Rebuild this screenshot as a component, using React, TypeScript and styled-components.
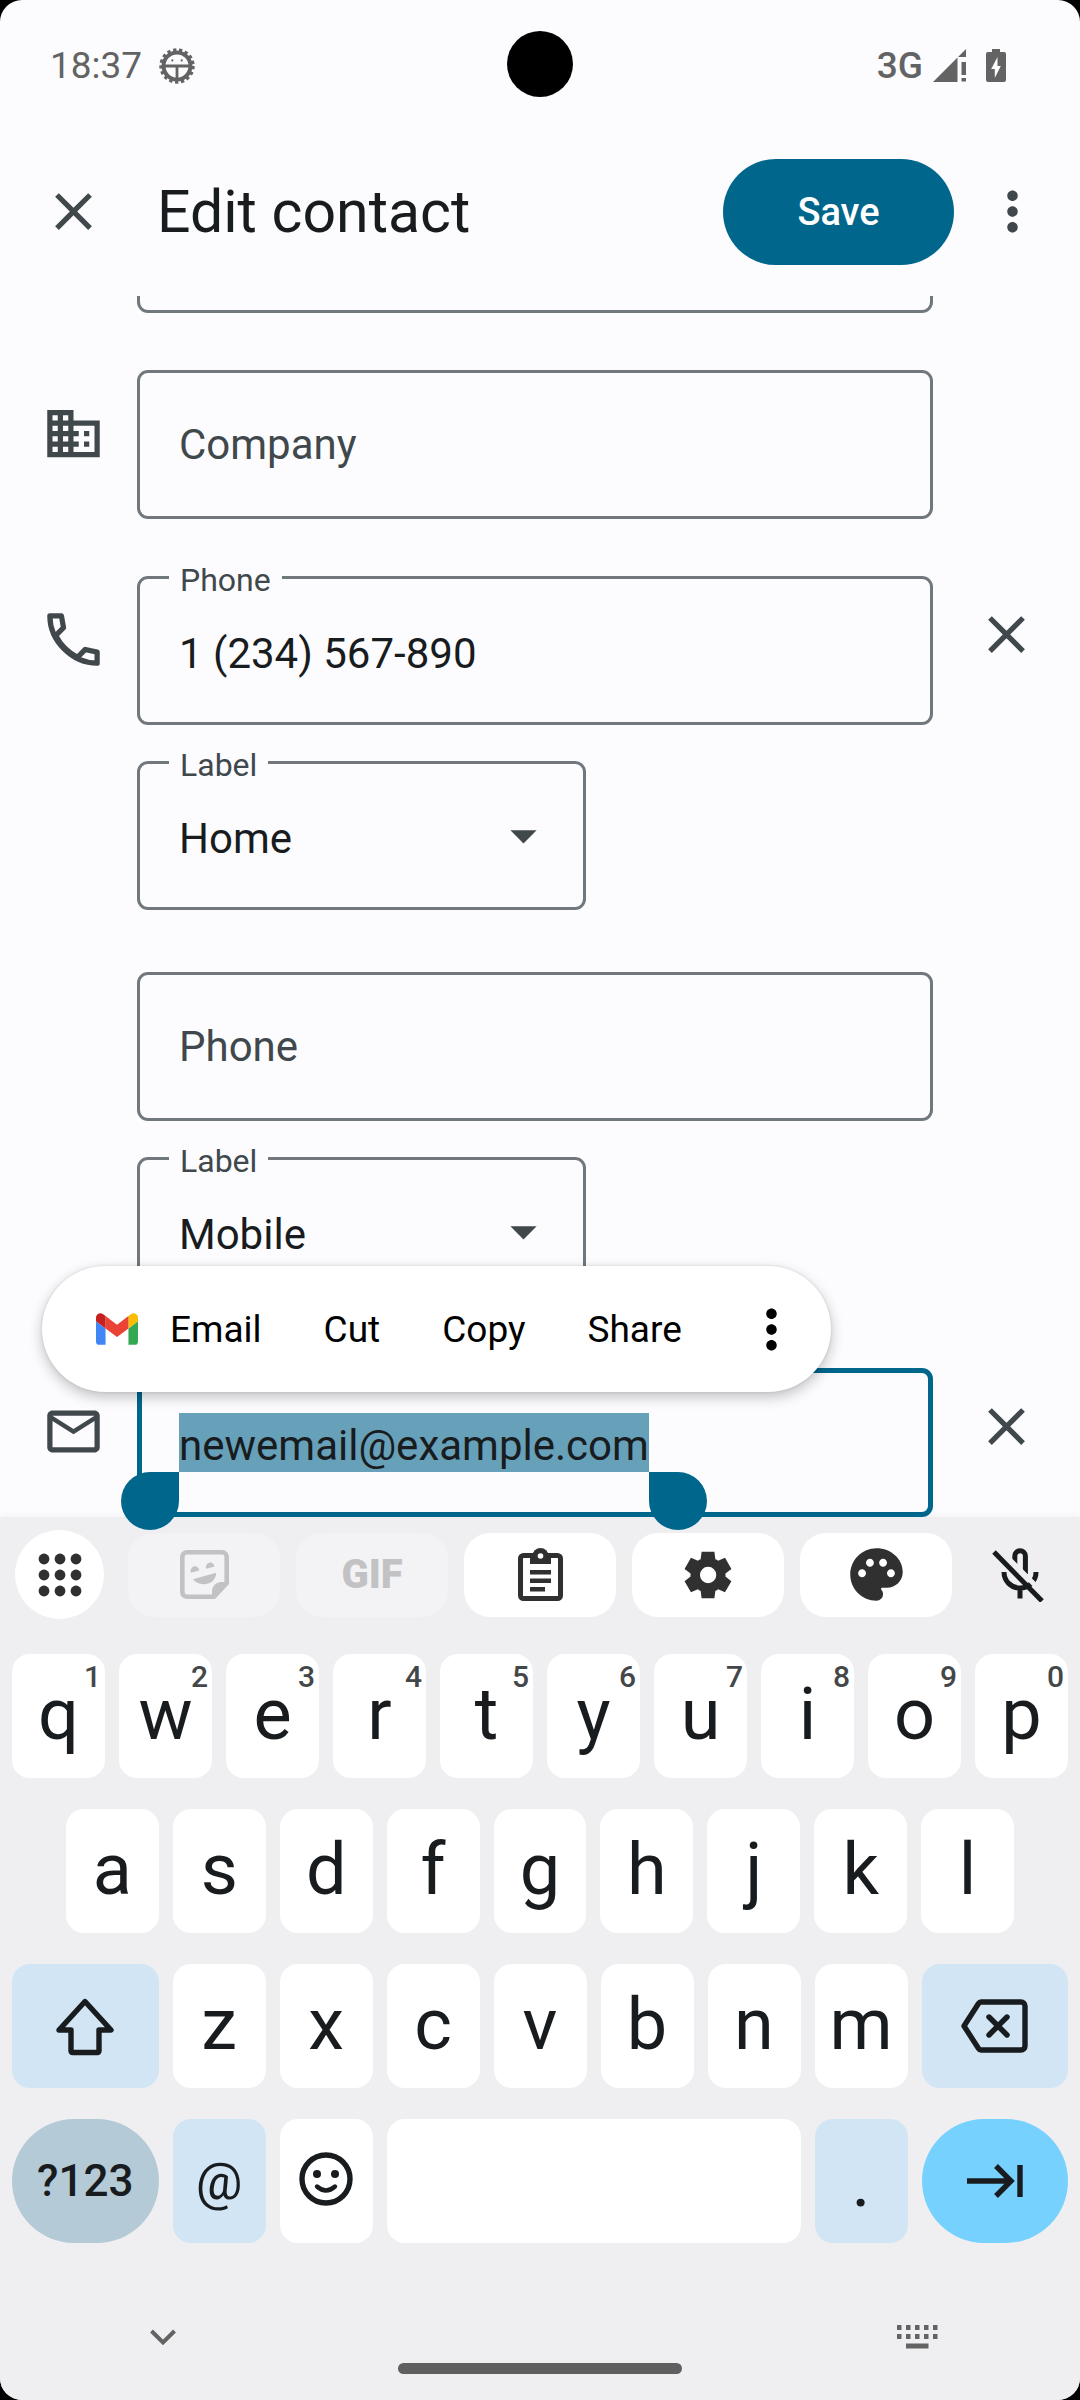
import React from "react";
import styled, { createGlobalStyle, css } from "styled-components";
import {
  MdArrowDropDown,
  MdBusiness,
  MdClose,
  MdMoreVert,
  MdOutlineEmail,
  MdPalette,
} from "react-icons/md";

const color = {
  surface: "#fcfcff",
  ink: "#191c1e",
  muted: "#40484c",
  outline: "#70787d",
  primary: "#00668b",
  selection: "#67a0b9",
  board: "#efeff1",
  tool: "#303030",
  system: "#636363",
};

const GlobalStyle = createGlobalStyle`
  * { box-sizing: border-box; }
  html { background: #000; }
  body { margin: 0; font-family: Roboto, "Noto Sans", sans-serif; color: ${color.ink}; }
  button, input, select { font: inherit; color: inherit; margin: 0; padding: 0; border: 0; background: none; outline: 0; }
  button { cursor: pointer; }
  svg { display: block; flex: none; }
`;

const Phone = styled.main`
  position: relative;
  display: flex;
  flex-direction: column;
  min-height: 100vh;
  overflow: hidden;
  border-radius: 22px;
  background: ${color.surface};
`;

/* Status bar */

const StatusBar = styled.div`
  display: flex;
  align-items: center;
  justify-content: space-between;
  height: 127px;
  padding: 4px 74px 0 50px;
  color: ${color.system};
  font-size: 37px;
`;

const StatusGroup = styled.div<{ $gap: number }>`
  display: flex;
  align-items: center;
  gap: ${(p) => p.$gap}px;
  font-weight: ${(p) => (p.$gap > 12 ? 400 : 500)};
`;

const Camera = styled.div`
  position: absolute;
  top: 31px;
  left: 50%;
  width: 66px;
  height: 66px;
  margin-left: -33px;
  border-radius: 50%;
  background: #000;
`;

/* App bar */

const AppBar = styled.header`
  display: flex;
  align-items: center;
  height: 169px;
  padding: 0 36px 0 42px;
`;

const IconButton = styled.button`
  display: flex;
  align-items: center;
  justify-content: center;
  width: 63px;
  height: 63px;
  flex: none;
  color: ${color.muted};
`;

const Title = styled.h1`
  flex: 1;
  margin: 0 0 0 52px;
  font-size: 59px;
  font-weight: 400;
`;

const SaveButton = styled.button`
  min-width: 231px;
  height: 106px;
  margin-right: 27px;
  border-radius: 53px;
  background: ${color.primary};
  color: #fff;
  font-size: 38px;
  font-weight: 500;
`;

/* Form: the first field is scrolled half way under the app bar */

const Form = styled.form`
  position: relative;
  z-index: 1;
  display: flex;
  flex-direction: column;
  margin-top: -132px;
  clip-path: inset(132px 0 -40px 0);
`;

const Row = styled.div<{ $space?: number }>`
  position: relative;
  display: grid;
  grid-template-columns: 95px 1fr 147px;
  align-items: start;
  margin-top: ${(p) => p.$space || 0}px;
  padding-left: 42px;
`;

const RowIcon = styled.span`
  grid-column: 1;
  padding-top: 32px;
  color: ${color.muted};
`;

const RowAction = styled.div`
  grid-column: 3;
  display: flex;
  justify-content: center;
  padding-top: 27px;
`;

const Field = styled.div<{ $active?: boolean; $half?: boolean }>`
  grid-column: 2;
  position: relative;
  display: flex;
  align-items: center;
  height: 149px;
  width: ${(p) => (p.$half ? "449px" : "auto")};
  border: 3px solid ${color.outline};
  border-radius: 11px;
  padding: 0 28px 0 39px;
  font-size: 42px;

  ${(p) =>
    p.$active &&
    css`
      border: 5px solid ${color.primary};
      padding-left: 37px;
    `}
`;

const FloatingLabel = styled.label`
  position: absolute;
  top: -18px;
  left: 29px;
  padding: 0 11px;
  background: ${color.surface};
  color: ${color.muted};
  font-size: 32px;
  line-height: 38px;
`;

const TextInput = styled.input<{ $labelled?: boolean }>`
  width: 100%;
  height: 100%;
  padding-top: ${(p) => (p.$labelled ? 6 : 0)}px;
  &::placeholder {
    color: ${color.muted};
    opacity: 1;
  }
`;

const Select = styled.select`
  appearance: none;
  flex: 1;
  height: 100%;
  padding-top: 6px;
`;

const Selection = styled.div`
  position: relative;
  display: flex;
`;

const SelectedInput = styled.input`
  field-sizing: content;
  height: 59px;
  padding-top: 6px;
  background: ${color.selection};
`;

const Handle = styled.span<{ $side: "start" | "end" }>`
  position: absolute;
  top: 100%;
  width: 58px;
  height: 58px;
  background: ${color.primary};
  ${(p) =>
    p.$side === "start"
      ? "right: 100%; border-radius: 50% 0 50% 50%;"
      : "left: 100%; border-radius: 0 50% 50% 50%;"}
`;

const ContextMenu = styled.div`
  position: absolute;
  top: -102px;
  left: 42px;
  display: flex;
  height: 126px;
  padding-left: 23px;
  border-radius: 63px;
  background: #fff;
  box-shadow: 0 5px 14px rgba(0, 0, 0, 0.24), 0 0 3px rgba(0, 0, 0, 0.12);
  color: #000;
  font-size: 37px;
`;

const MenuItem = styled.button`
  display: flex;
  align-items: center;
  gap: 32px;
  padding: 0 31px;
`;

const MenuMore = styled(MenuItem)`
  padding: 0 28px 0 27px;
`;

/* Keyboard */

const Keyboard = styled.section`
  display: flex;
  flex-direction: column;
  flex: 1;
  background: ${color.board};
  box-shadow: 0 0 8px rgba(0, 0, 0, 0.06);
`;

const Toolbar = styled.div`
  display: flex;
  align-items: center;
  gap: 24px;
  padding: 13px 21px 35px 15px;
`;

const AppsButton = styled.button`
  display: flex;
  align-items: center;
  justify-content: center;
  width: 89px;
  height: 89px;
  border-radius: 50%;
  background: #fff;
`;

const Chips = styled.div`
  display: flex;
  flex: 1;
  gap: 16px;
`;

const Chip = styled.button`
  display: flex;
  flex: 1;
  align-items: center;
  justify-content: center;
  height: 84px;
  border-radius: 26px;
  background: #fff;
  color: ${color.tool};
  font-size: 40px;
  font-weight: 900;
  &:disabled {
    background: #f3f3f6;
    color: #c2c2c4;
  }
`;

const MicButton = styled.button`
  display: flex;
  justify-content: center;
  width: 83px;
`;

const Keys = styled.div`
  display: flex;
  flex-direction: column;
  gap: 31px;
  padding: 0 12px;
`;

const KeyRow = styled.div<{ $inset?: boolean }>`
  display: flex;
  gap: 14px;
  padding: 0 ${(p) => (p.$inset ? 54 : 0)}px;
`;

const tones = { plain: "#fff", soft: "#d2e5f4", mode: "#b4cad6", action: "#77d1ff" };

const KeyCap = styled.button<{ $span: number; $tone: keyof typeof tones; $size?: number }>`
  position: relative;
  display: flex;
  align-items: center;
  justify-content: center;
  flex: ${(p) => p.$span} 1 ${(p) => (p.$span - 1) * 14}px;
  height: 124px;
  padding-bottom: ${(p) => (p.$tone === "plain" ? 4 : 0)}px;
  border-radius: ${(p) => (p.$tone === "mode" || p.$tone === "action" ? 62 : 18)}px;
  background: ${(p) => tones[p.$tone]};
  font-size: ${(p) => p.$size || 72}px;
  font-weight: ${(p) => (p.$tone === "mode" ? 500 : 400)};
`;

const Hint = styled.span`
  position: absolute;
  top: 5px;
  right: 4px;
  color: #444749;
  font-size: 30px;
  line-height: 36px;
  font-weight: 500;
`;

const NavBar = styled.nav`
  position: relative;
  display: flex;
  align-items: center;
  justify-content: space-between;
  height: 126px;
  margin-top: auto;
  padding: 0 131px;
  color: ${color.system};
`;

const NavButton = styled(IconButton)`
  color: ${color.system};
`;

const HomePill = styled.span`
  align-self: flex-end;
  width: 284px;
  height: 11px;
  margin-bottom: 26px;
  border-radius: 6px;
  background: #5f5f5f;
`;

/* Icons */

const DebugIcon = () => (
  <svg width="36" height="36" viewBox="0 0 36 36" fill="none" stroke="currentColor">
    <circle cx="18" cy="18" r="13.5" strokeWidth="4" />
    <circle cx="18" cy="18" r="16.2" strokeWidth="3" strokeDasharray="3.3 2.69" />
    <path d="M5 18h26M18 18v14" strokeWidth="2.8" />
    <circle cx="13.3" cy="12.4" r="1.1" fill="currentColor" stroke="none" />
    <circle cx="22.7" cy="12.4" r="1.1" fill="currentColor" stroke="none" />
  </svg>
);

const SignalIcon = () => (
  <svg width="33" height="33" viewBox="0 0 33 33" fill="currentColor">
    <path d="M0 33 24.5 8.5V33zM25 8l8-8v8zM28.5 13H33v13h-4.500zM28.500 29H33v3.500h-4.500z" />
  </svg>
);

const BatteryIcon = () => (
  <svg width="20" height="33" viewBox="0 0 20 33">
    <path
      d="M6 0h8v3h4a2 2 0 0 1 2 2v26a2 2 0 0 1-2 2H2a2 2 0 0 1-2-2V5a2 2 0 0 1 2-2h4z"
      fill="currentColor"
    />
    <path d="M11.500 8 5.200 20h3.600v9l6-12h-3.300z" fill={color.surface} />
  </svg>
);

const PhoneIcon = () => (
  <svg width="63" height="63" viewBox="0 0 24 24" fill="none" stroke="currentColor" strokeWidth="2">
    <path d="M3 3h4.400l.8 4.500-3 3C7 14 10 17 13.500 18.800l3-3 4.500 1V21C11.500 21 3 12.500 3 3z" strokeLinejoin="round" />
  </svg>
);

const GmailIcon = () => (
  <svg width="42" height="32" viewBox="52 42 88 66">
    <path fill="#4285f4" d="M58 108h14V74L52 59v43c0 3.320 2.690 6 6 6" />
    <path fill="#34a853" d="M120 108h14c3.320 0 6-2.690 6-6V59l-20 15" />
    <path fill="#fbbc04" d="M120 48v26l20-15v-8c0-7.420-8.470-11.650-14.400-7.200" />
    <path fill="#ea4335" d="M72 74V48l24 18 24-18v26L96 92" />
    <path fill="#c5221f" d="M52 51v8l20 15V48l-5.600-4.200c-5.940-4.450-14.400-.22-14.400 7.200" />
  </svg>
);

const GridDots = () => (
  <svg width="44" height="44" viewBox="0 0 44 44" fill={color.tool}>
    {[6, 22, 38].map((y) => [6, 22, 38].map((x) => <circle key={`${x}-${y}`} cx={x} cy={y} r="5.400" />))}
  </svg>
);

const StickerIcon = () => (
  <svg width="49" height="49" viewBox="0 0 49 49" fill="currentColor">
    <path
      d="M34 46.700H7A4.700 4.700 0 0 1 2.300 42V7A4.700 4.700 0 0 1 7 2.300h35A4.700 4.700 0 0 1 46.700 7v26z"
      fill="none"
      stroke="currentColor"
      strokeWidth="4.600"
    />
    <path d="M32 47v-6a9 9 0 0 1 9-9h6z" />
    <path d="M10.700 22.700c-.8-7.500 7.200-8.500 8.600-2.300zM26 18.800c-.8-7.500 7.200-8.500 8.600-2.300z" />
    <path d="M13 29.300 36.300 22.700C35.500 35.500 19.500 37.500 13 29.300z" />
  </svg>
);

const ClipboardIcon = () => (
  <svg width="45" height="53" viewBox="0 0 45 53" fill="currentColor">
    <rect x="2.500" y="7.500" width="40" height="43" rx="3" fill="none" stroke="currentColor" strokeWidth="5" />
    <path d="M12 6h21v10H12zM12 22h21v4.500H12zM12 30.500h21V35H12zM12 39h15v4.500H12z" />
    <circle cx="22.500" cy="8" r="8" />
    <circle cx="22.500" cy="8" r="2.800" fill="#fff" />
  </svg>
);

const GearIcon = () => (
  <svg width="56" height="56" viewBox="0 -960 960 960" fill="currentColor">
    <path d="m370-80-16-128q-13-5-24.500-12T307-235l-119 50L78-375l103-78q-1-7-1-13.500v-27q0-6.500 1-13.500L78-585l110-190 119 50q11-8 23-15t24-12l16-128h220l16 128q13 5 24.500 12t22.500 15l119-50 110 190-103 78q1 7 1 13.500v27q0 6.500-2 13.500l103 78-110 190-118-50q-11 8-23 15t-24 12L590-80H370Zm112-260q58 0 99-41t41-99q0-58-41-99t-99-41q-59 0-99.500 41T342-480q0 58 40.500 99t99.500 41Z" />
  </svg>
);

const MicOffIcon = () => (
  <svg width="52" height="54" viewBox="0 0 52 54" fill="none" strokeWidth="5">
    <g stroke={color.ink}>
      <path d="M22.800 18V8a5.300 5.300 0 0 1 10.600 0v18" />
      <path d="M12 24c0 9 7 16 16 16s16-7 16-16M28 40v10.500" />
    </g>
    <path d="M6 0l46 46" stroke={color.board} strokeWidth="5" />
    <path d="M2 4l48 49" stroke={color.ink} />
  </svg>
);

const ShiftIcon = () => (
  <svg width="60" height="60" viewBox="0 0 60 60" fill="none" stroke="currentColor" strokeWidth="5.400" strokeLinejoin="round">
    <path d="M30 5.500 56 34H44v21a1.500 1.500 0 0 1-1.500 1.500h-25A1.500 1.500 0 0 1 16 55V34H4z" />
  </svg>
);

const BackspaceIcon = () => (
  <svg width="67" height="54" viewBox="0 0 67 54" fill="none" stroke="currentColor" strokeWidth="5.400" strokeLinejoin="round" strokeLinecap="round">
    <path d="M20 3h40a4 4 0 0 1 4 4v40a4 4 0 0 1-4 4H20q-1.500 0-2.500-1.500L3 27 17.500 4.500Q18.500 3 20 3zM28 18l18 18M46 18 28 36" />
  </svg>
);

const SmileIcon = () => (
  <svg width="54" height="54" viewBox="0 0 54 54" fill="none" stroke="currentColor">
    <circle cx="27" cy="27" r="24" strokeWidth="5.400" />
    <circle cx="18" cy="22" r="4" fill="currentColor" stroke="none" />
    <circle cx="36" cy="22" r="4" fill="currentColor" stroke="none" />
    <path d="M18 34.500q9 8 18 0" strokeWidth="4.400" strokeLinecap="round" />
  </svg>
);

const TabIcon = () => (
  <svg width="56" height="34" viewBox="0 0 56 34" fill="none" stroke="currentColor" strokeWidth="5.400">
    <path d="M0 17h45M29 2l15 15-15 15M53 1v32" />
  </svg>
);

const ChevronIcon = () => (
  <svg width="26" height="17" viewBox="0 0 26 17" fill="none" stroke="currentColor" strokeWidth="4">
    <path d="M1.500 2 13 13.500 24.500 2" />
  </svg>
);

const KeyboardIcon = () => (
  <svg width="41" height="24" viewBox="0 0 41 24" fill="currentColor">
    {[0, 9, 18, 27, 36].map((x) => (
      <path key={x} d={`M${x} 0h4.500v5H${x}zM${x} 9h4.500v5H${x}z`} />
    ))}
    <path d="M9 18.500h22.500v5H9z" />
  </svg>
);

/* Keyboard data */

type KeyDef = {
  name: string;
  hint?: string;
  span?: number;
  tone?: keyof typeof tones;
  size?: number;
  face?: React.ReactNode;
};

const letters = (text: string): KeyDef[] => text.split("").map((name) => ({ name }));

const topRow: KeyDef[] = letters("qwertyuiop").map((k, i) => ({ ...k, hint: String((i + 1) % 10) }));
const homeRow = letters("asdfghjkl");
const lowerRow: KeyDef[] = [
  { name: "Shift", span: 1.5, tone: "soft", face: <ShiftIcon /> },
  ...letters("zxcvbnm"),
  { name: "Delete", span: 1.5, tone: "soft", face: <BackspaceIcon /> },
];
const bottomRow: KeyDef[] = [
  { name: "?123", span: 1.5, tone: "mode", size: 44 },
  { name: "@", tone: "soft", size: 52 },
  { name: "Emoji", face: <SmileIcon /> },
  { name: "Space", span: 4, face: "" },
  { name: ".", tone: "soft" },
  { name: "Next", span: 1.5, tone: "action", face: <TabIcon /> },
];

const Key = ({ name, hint, span = 1, tone = "plain", size, face }: KeyDef) => (
  <KeyCap
    type="button"
    $span={span}
    $tone={tone}
    $size={size}
    aria-label={face === undefined ? undefined : name}
  >
    {face === undefined ? name : face}
    {hint && <Hint>{hint}</Hint>}
  </KeyCap>
);

const LabelSelect = ({ id, value }: { id: string; value: string }) => (
  <Field $half>
    <FloatingLabel htmlFor={id}>Label</FloatingLabel>
    <Select id={id} defaultValue={value}>
      <option>Home</option>
      <option>Mobile</option>
    </Select>
    <MdArrowDropDown size={63} color={color.muted} pointerEvents="none" />
  </Field>
);

export default function App() {
  return (
    <Phone>
      <GlobalStyle />
      <StatusBar>
        <StatusGroup $gap={17}>
          <span>18:37</span>
          <DebugIcon />
        </StatusGroup>
        <StatusGroup $gap={10}>
          <span>3G</span>
          <SignalIcon />
          <span />
          <BatteryIcon />
        </StatusGroup>
      </StatusBar>
      <Camera />

      <AppBar>
        <IconButton type="button" aria-label="Close">
          <MdClose size={63} />
        </IconButton>
        <Title>Edit contact</Title>
        <SaveButton type="submit" form="contact">
          Save
        </SaveButton>
        <IconButton type="button" aria-label="More options">
          <MdMoreVert size={63} />
        </IconButton>
      </AppBar>

      <Form id="contact" onSubmit={(e) => e.preventDefault()}>
        <Row>
          <Field>
            <TextInput aria-label="Last name" />
          </Field>
        </Row>
        <Row $space={57}>
          <RowIcon>
            <MdBusiness size={63} />
          </RowIcon>
          <Field>
            <TextInput aria-label="Company" placeholder="Company" />
          </Field>
        </Row>
        <Row $space={57}>
          <RowIcon>
            <PhoneIcon />
          </RowIcon>
          <Field>
            <FloatingLabel htmlFor="phone">Phone</FloatingLabel>
            <TextInput id="phone" type="tel" $labelled defaultValue="1 (234) 567-890" />
          </Field>
          <RowAction>
            <IconButton type="button" aria-label="Remove phone">
              <MdClose size={63} />
            </IconButton>
          </RowAction>
        </Row>
        <Row $space={36}>
          <LabelSelect id="phone-label" value="Home" />
        </Row>
        <Row $space={62}>
          <Field>
            <TextInput type="tel" aria-label="Phone" placeholder="Phone" />
          </Field>
        </Row>
        <Row $space={36}>
          <LabelSelect id="new-phone-label" value="Mobile" />
        </Row>
        <Row $space={62}>
          <RowIcon>
            <MdOutlineEmail size={63} />
          </RowIcon>
          <Field $active>
            <Selection>
              <SelectedInput aria-label="Email" defaultValue="newemail@example.com" />
              <Handle $side="start" />
              <Handle $side="end" />
            </Selection>
          </Field>
          <RowAction>
            <IconButton type="button" aria-label="Remove email">
              <MdClose size={63} />
            </IconButton>
          </RowAction>
          <ContextMenu>
            <MenuItem type="button">
              <GmailIcon />
              Email
            </MenuItem>
            <MenuItem type="button">Cut</MenuItem>
            <MenuItem type="button">Copy</MenuItem>
            <MenuItem type="button">Share</MenuItem>
            <MenuMore type="button" aria-label="More">
              <MdMoreVert size={63} />
            </MenuMore>
          </ContextMenu>
        </Row>
      </Form>

      <Keyboard aria-label="Keyboard">
        <Toolbar>
          <AppsButton type="button" aria-label="Features">
            <GridDots />
          </AppsButton>
          <Chips>
            <Chip type="button" disabled aria-label="Stickers">
              <StickerIcon />
            </Chip>
            <Chip type="button" disabled>
              GIF
            </Chip>
            <Chip type="button" aria-label="Clipboard">
              <ClipboardIcon />
            </Chip>
            <Chip type="button" aria-label="Settings">
              <GearIcon />
            </Chip>
            <Chip type="button" aria-label="Themes">
              <MdPalette size={63} />
            </Chip>
          </Chips>
          <MicButton type="button" aria-label="Voice input">
            <MicOffIcon />
          </MicButton>
        </Toolbar>
        <Keys>
          {[topRow, homeRow, lowerRow, bottomRow].map((row, i) => (
            <KeyRow key={i} $inset={i === 1}>
              {row.map((k) => (
                <Key key={k.name} {...k} />
              ))}
            </KeyRow>
          ))}
        </Keys>
        <NavBar>
          <NavButton type="button" aria-label="Hide keyboard">
            <ChevronIcon />
          </NavButton>
          <HomePill />
          <NavButton type="button" aria-label="Switch keyboard">
            <KeyboardIcon />
          </NavButton>
        </NavBar>
      </Keyboard>
    </Phone>
  );
}
